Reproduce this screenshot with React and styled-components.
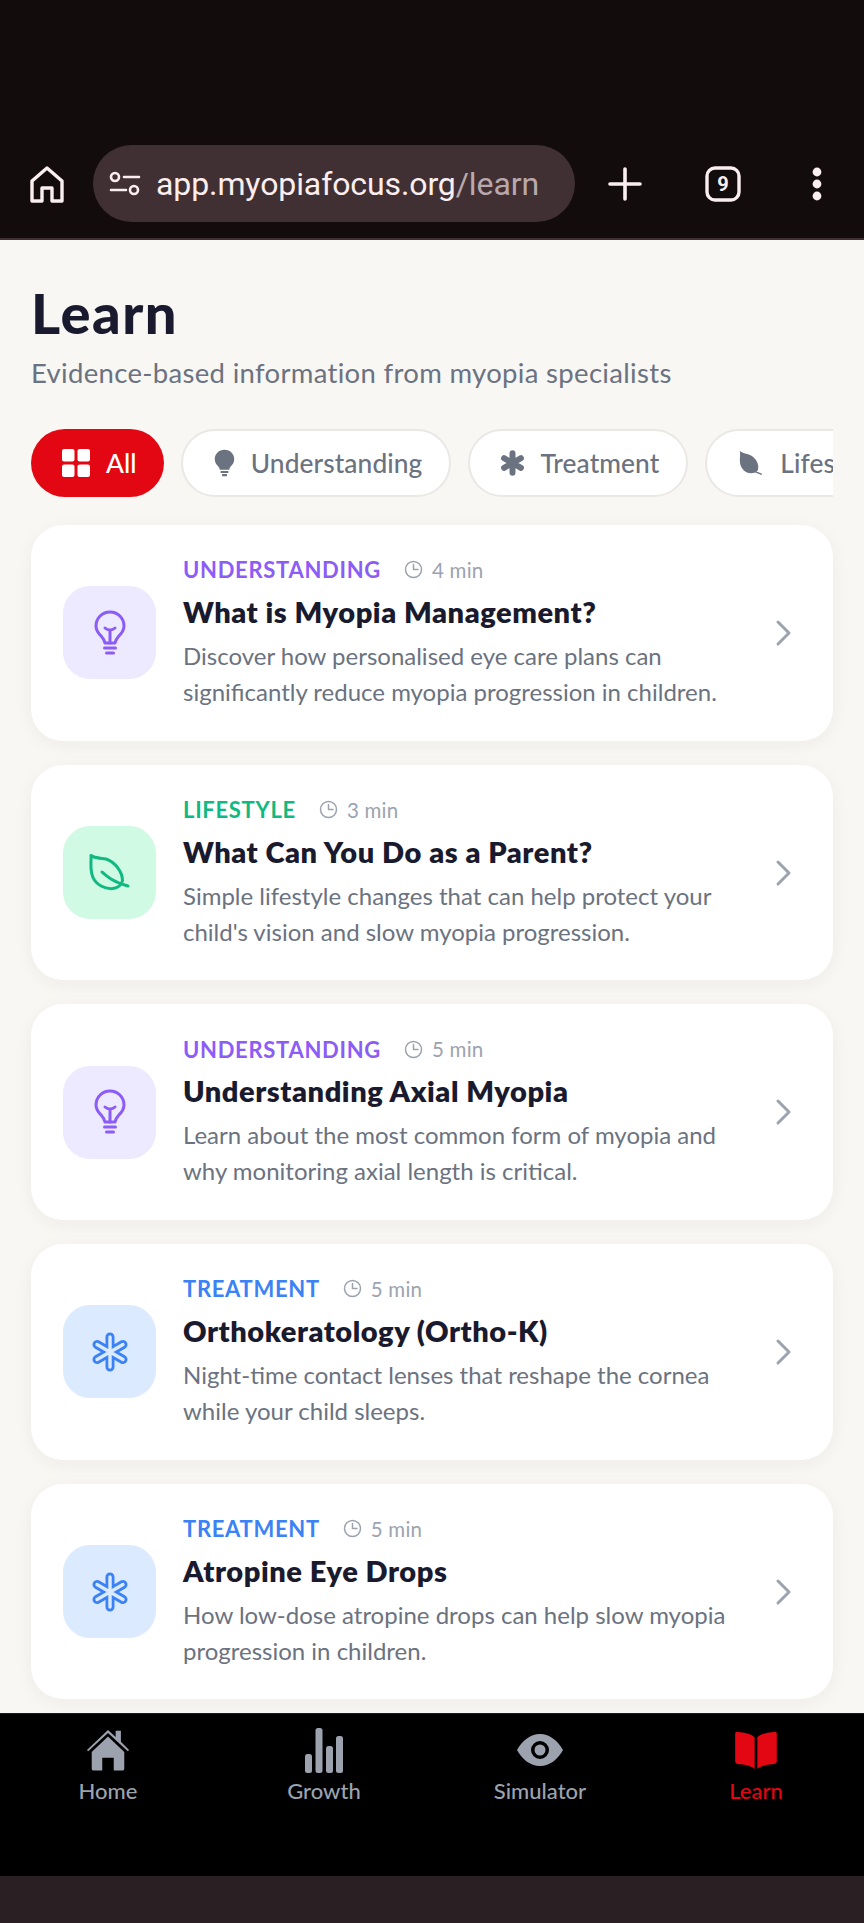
import React from 'react';
import styled, { createGlobalStyle } from 'styled-components';

const Global = createGlobalStyle`
  html, body { margin: 0; padding: 0; background: #f8f7f4; }
  * { box-sizing: border-box; }
`;

const FONT = `Lato, "Noto Sans", sans-serif`;

const Screen = styled.div`
  width: 864px;
  height: 1923px;
  display: flex;
  flex-direction: column;
  overflow: hidden;
  font-family: ${FONT};
`;

const BrowserBar = styled.div`
  height: 240px;
  flex: none;
  background: #120c0d;
  border-bottom: 2px solid #3f3033;
  padding: 145px 0 0 28px;
  display: flex;
  align-items: flex-start;
  color: #fbeef0;
`;
const BarSlot = styled.div`
  height: 77px;
  display: flex;
  align-items: center;
  justify-content: center;
  flex: none;
  width: ${p => p.$w}px;
  margin-left: ${p => p.$ml || 0}px;
`;
const UrlPill = styled.div`
  width: 482px;
  height: 77px;
  margin-left: 27px;
  flex: none;
  background: #413033;
  border-radius: 39px;
  display: flex;
  align-items: center;
  padding-left: 16px;
  gap: 15px;
  font-family: Roboto, sans-serif;
  font-size: 32px;
  letter-spacing: -0.1px;
  color: #fbeef0;
`;
const UrlMuted = styled.span`
  color: #b9a9ac;
`;

const Main = styled.main`
  flex: 1;
  min-height: 0;
  background: #f8f7f4;
  padding: 42px 31px 0;
  overflow: hidden;
`;
const Title = styled.h1`
  margin: 0;
  font-size: 56px;
  line-height: 62px;
  font-weight: 900;
  letter-spacing: 1.5px;
  color: #1a1a2e;
`;
const Subtitle = styled.p`
  margin: 11px 0 0;
  font-size: 27.5px;
  line-height: 36px;
  letter-spacing: 0.32px;
  color: #6b7280;
`;
const ChipRow = styled.div`
  display: flex;
  gap: 17px;
  margin-top: 38px;
  overflow: hidden;
`;
const Chip = styled.div`
  flex: none;
  height: 68px;
  border-radius: 34px;
  display: flex;
  align-items: center;
  gap: 15px;
  padding: 0 27px 0 30px;
  font-size: 26.3px;
  font-weight: 500;
  letter-spacing: 0.1px;
  background: ${p => (p.$active ? '#e30613' : '#fff')};
  color: ${p => (p.$active ? '#fff' : '#6b7280')};
  border: ${p => (p.$active ? 'none' : '2px solid #e9e8e6')};
`;

const CardList = styled.div`
  display: flex;
  flex-direction: column;
  gap: 24px;
  margin-top: 28px;
`;
const Card = styled.article`
  height: 215.7px;
  background: #fff;
  border-radius: 32px;
  box-shadow: 0 4px 18px rgba(40, 35, 20, 0.05);
  display: flex;
  align-items: center;
  padding: 0 29px 0 32px;
`;
const IconBox = styled.div`
  width: 93px;
  height: 93px;
  flex: none;
  border-radius: 27px;
  background: ${p => p.$bg};
  color: ${p => p.$fg};
  display: flex;
  align-items: center;
  justify-content: center;
`;
const CardBody = styled.div`
  flex: 1;
  min-width: 0;
  margin-left: 27px;
`;
const Meta = styled.div`
  display: flex;
  align-items: center;
  height: 28px;
`;
const Category = styled.span`
  font-size: 22px;
  font-weight: 700;
  letter-spacing: 0.7px;
  color: ${p => p.$color};
`;
const Duration = styled.span`
  display: flex;
  align-items: center;
  gap: 9px;
  margin-left: 23px;
  font-size: 20.5px;
  letter-spacing: 0.2px;
  color: #9ca3af;
`;
const CardTitle = styled.h2`
  margin: 10px 0 0;
  font-size: 29px;
  line-height: 36px;
  font-weight: 800;
  letter-spacing: 0.55px;
  color: #1a1a2e;
`;
const Desc = styled.p`
  margin: 8px 0 0;
  font-size: 24px;
  line-height: 36px;
  color: #6b7280;
  white-space: pre-line;
`;
const Chevron = styled.div`
  width: 40px;
  flex: none;
  display: flex;
  justify-content: center;
  color: #9ca3af;
`;

const BottomNav = styled.nav`
  height: 163px;
  flex: none;
  background: #000;
  display: grid;
  grid-template-columns: repeat(4, 1fr);
  border-top: 1px solid #1b1b1b;
`;
const NavItem = styled.div`
  display: flex;
  flex-direction: column;
  align-items: center;
  padding-top: 11px;
  gap: 2px;
  font-size: 22px;
  font-weight: 500;
  line-height: 28px;
  color: ${p => (p.$active ? '#e30613' : '#9ca3af')};
`;
const NavIcon = styled.div`
  height: 50px;
  display: flex;
  align-items: center;
  justify-content: center;
`;
const SystemStrip = styled.div`
  height: 47px;
  flex: none;
  background: #2a1f22;
`;

// browser chrome icons
const ChromeHome = () => (
  <svg width="36" height="38" viewBox="0 0 36 38" fill="none" stroke="currentColor" strokeWidth="3.4" strokeLinejoin="round">
    <path d="M3 16 18 3l15 13v20H23V23H13v13H3z" />
  </svg>
);
const TuneIcon = () => (
  <svg width="32" height="26" viewBox="0 0 32 26" fill="none" stroke="currentColor" strokeWidth="2.6" strokeLinecap="round">
    <circle cx="6" cy="6" r="4" />
    <path d="M15 6h15M2 19h15" />
    <circle cx="25" cy="19" r="4" />
  </svg>
);
const PlusIcon = () => (
  <svg width="34" height="34" viewBox="0 0 34 34" stroke="currentColor" strokeWidth="3.6" strokeLinecap="round">
    <path d="M17 2v30M2 17h30" />
  </svg>
);
const TabsIcon = () => (
  <svg width="36" height="36" viewBox="0 0 36 36" fill="none">
    <rect x="2" y="2" width="32" height="32" rx="8" stroke="currentColor" strokeWidth="3.4" />
    <text x="18" y="25" textAnchor="middle" fontFamily="Roboto, sans-serif" fontWeight="700" fontSize="20" fill="currentColor">9</text>
  </svg>
);
const DotsIcon = () => (
  <svg width="12" height="34" viewBox="0 0 12 34" fill="currentColor">
    <circle cx="6" cy="5" r="4.4" />
    <circle cx="6" cy="17" r="4.4" />
    <circle cx="6" cy="29" r="4.4" />
  </svg>
);

// filter chip icons
const GridIcon = () => (
  <svg width="30" height="30" viewBox="0 0 30 30" fill="currentColor">
    <rect x="1" y="1" width="12.5" height="12.5" rx="2" />
    <rect x="16.5" y="1" width="12.5" height="12.5" rx="2" />
    <rect x="1" y="16.5" width="12.5" height="12.5" rx="2" />
    <rect x="16.5" y="16.5" width="12.5" height="12.5" rx="2" />
  </svg>
);
const BulbSolid = () => (
  <svg width="23" height="30" viewBox="0 0 26 32" fill="currentColor">
    <path d="M13 1C6.6 1 2 5.8 2 11.5c0 4 2 6.4 4 8.500 1 1.100 1.500 2.200 1.700 3.500h10.600c.2-1.300.7-2.400 1.700-3.500 2-2.100 4-4.500 4-8.500C24 5.800 19.400 1 13 1z" />
    <rect x="8.500" y="25" width="9" height="2.400" rx="1" />
    <rect x="10" y="28.500" width="6" height="2.400" rx="1" />
  </svg>
);
const AsteriskSolid = () => (
  <svg width="25" height="26" viewBox="0 0 26 28" stroke="currentColor" strokeWidth="6.400" strokeLinecap="round">
    <path d="M13 3.500v21M3.900 8.750l18.200 10.500M22.100 8.750 3.900 19.250" />
  </svg>
);
const LeafSolid = () => (
  <svg width="28" height="26" viewBox="0 0 28 28" fill="currentColor">
    <path d="M2 1c1 6-1.500 12 2 18 2.800 5 9 7 13.500 5.500 2-.7 3.300-2 4-3.300C23 16 20 9.500 14 6 10 3.700 5 3.500 2 1z" />
    <path d="M19 23.500 25 26" stroke="currentColor" strokeWidth="1.600" strokeLinecap="round" />
  </svg>
);

// card icons
const BulbLine = () => (
  <svg width="32" height="46" viewBox="0 0 32 46" fill="none" stroke="currentColor" strokeWidth="3" strokeLinecap="round" strokeLinejoin="round">
    <path d="M11 33c-.3-2.400-1.400-4.300-3.500-6.600C4.500 23.500 2 20.600 2 16 2 8 8.300 2 16 2s14 6 14 14c0 4.600-2.500 7.500-5.500 10.400-2.100 2.300-3.200 4.200-3.500 6.600z" />
    <path d="M16 33V20M11 18c1.700 1.500 3.500 2 5 2s3.300-.5 5-2" />
    <path d="M10.500 38h11M12.500 43h7" />
  </svg>
);
const LeafLine = () => (
  <svg width="42" height="38" viewBox="0 0 42 38" fill="none" stroke="currentColor" strokeWidth="3" strokeLinecap="round" strokeLinejoin="round">
    <path d="M2 1.500c.500 6-1.500 14 2 22 3 7 12 12 20 11 5.500-.7 8.500-4 9.500-8C33.500 18 26 8 17 5 10 4 5 4 2 1.500z" />
    <path d="M13 18c5 4.500 11 10 26 14" />
  </svg>
);
const ArmsLine = ({ bg }) => {
  const arms = 'M20 5v30M7 12.500l26 15M33 12.500 7 27.500';
  return (
    <svg width="40" height="40" viewBox="0 0 40 40" fill="none" strokeLinecap="round">
      <path d={arms} stroke="currentColor" strokeWidth="9" />
      <path d={arms} stroke={bg} strokeWidth="3.400" />
    </svg>
  );
};
const ClockIcon = () => (
  <svg width="19" height="19" viewBox="0 0 19 19" fill="none" stroke="currentColor" strokeWidth="1.500" strokeLinecap="round" strokeLinejoin="round">
    <circle cx="9.500" cy="9.500" r="8" />
    <path d="M9.500 4.500v5h4.500" />
  </svg>
);
const ChevronIcon = () => (
  <svg width="18" height="28" viewBox="0 0 18 28" fill="none" stroke="currentColor" strokeWidth="3" strokeLinecap="round" strokeLinejoin="round">
    <path d="M3 3l11 11L3 25" />
  </svg>
);

// bottom nav icons
const NavHome = () => (
  <svg width="46" height="44" viewBox="0 0 46 46" fill="currentColor">
    <path d="M1 23 23 2l8 7.500V3h5.500v11.500L45 23l-1.300 1.400L23 5.300 2.300 24.400z" />
    <path d="M6 25 23 9l17 16v17.500a2 2 0 0 1-2 2H29V31H17v13.500H8a2 2 0 0 1-2-2z" />
  </svg>
);
const NavGrowth = () => (
  <svg width="40" height="46" viewBox="0 0 40 46" fill="currentColor">
    <rect x="1" y="27" width="7" height="19" rx="2.500" />
    <rect x="11.500" y="1" width="7" height="45" rx="2.500" />
    <rect x="22" y="19" width="7" height="27" rx="2.500" />
    <rect x="32" y="9" width="7" height="37" rx="2.500" />
  </svg>
);
const NavEye = () => (
  <svg width="46" height="32" viewBox="0 0 46 32" fill="currentColor" fillRule="evenodd">
    <path d="M23 0c10 0 18 7 23 16-5 9-13 16-23 16S5 25 0 16C5 7 13 0 23 0zm0 7a9 9 0 1 0 0 18 9 9 0 0 0 0-18zm0 3.500a5.500 5.500 0 1 1 0 11 5.500 5.500 0 0 1 0-11z" />
  </svg>
);
const NavBook = () => (
  <svg width="46" height="38" viewBox="0 0 48 42" fill="currentColor">
    <path d="M22.500 7v35c-4-3.500-10-5-19-5.500A3 3 0 0 1 1 33.500V3a2 2 0 0 1 2.500-2c8 .5 15 2 19 6z" />
    <path d="M25.500 7v35c4-3.500 10-5 19-5.500a3 3 0 0 0 2.500-3V3a2 2 0 0 0-2.500-2c-8 .5-15 2-19 6z" />
  </svg>
);

const KINDS = {
  understanding: { label: 'UNDERSTANDING', color: '#8b5cf6', bg: '#ede9fe', icon: <BulbLine /> },
  lifestyle: { label: 'LIFESTYLE', color: '#10b981', bg: '#d1fae5', icon: <LeafLine /> },
  treatment: { label: 'TREATMENT', color: '#3b82f6', bg: '#dbeafe', icon: <ArmsLine bg="#dbeafe" /> },
};

const ARTICLES = [
  { kind: 'understanding', min: 4, title: 'What is Myopia Management?', desc: 'Discover how personalised eye care plans can\nsignificantly reduce myopia progression in children.' },
  { kind: 'lifestyle', min: 3, title: 'What Can You Do as a Parent?', desc: "Simple lifestyle changes that can help protect your\nchild's vision and slow myopia progression." },
  { kind: 'understanding', min: 5, title: 'Understanding Axial Myopia', desc: 'Learn about the most common form of myopia and\nwhy monitoring axial length is critical.' },
  { kind: 'treatment', min: 5, title: 'Orthokeratology (Ortho-K)', desc: 'Night-time contact lenses that reshape the cornea\nwhile your child sleeps.' },
  { kind: 'treatment', min: 5, title: 'Atropine Eye Drops', desc: 'How low-dose atropine drops can help slow myopia\nprogression in children.' },
];

const NAV = [
  { label: 'Home', icon: <NavHome /> },
  { label: 'Growth', icon: <NavGrowth /> },
  { label: 'Simulator', icon: <NavEye /> },
  { label: 'Learn', icon: <NavBook />, active: true },
];

export default function App() {
  return (
    <Screen>
      <Global />
      <BrowserBar>
        <BarSlot $w={38}><ChromeHome /></BarSlot>
        <UrlPill>
          <TuneIcon />
          <span>app.myopiafocus.org<UrlMuted>/learn</UrlMuted></span>
        </UrlPill>
        <BarSlot $w={36} $ml={32}><PlusIcon /></BarSlot>
        <BarSlot $w={36} $ml={62}><TabsIcon /></BarSlot>
        <BarSlot $w={12} $ml={70}><DotsIcon /></BarSlot>
      </BrowserBar>

      <Main>
        <Title>Learn</Title>
        <Subtitle>Evidence-based information from myopia specialists</Subtitle>
        <ChipRow>
          <Chip $active><GridIcon />All</Chip>
          <Chip><BulbSolid />Understanding</Chip>
          <Chip><AsteriskSolid />Treatment</Chip>
          <Chip><LeafSolid />Lifestyle</Chip>
        </ChipRow>
        <CardList>
          {ARTICLES.map(a => {
            const kind = KINDS[a.kind];
            return (
              <Card key={a.title}>
                <IconBox $bg={kind.bg} $fg={kind.color}>{kind.icon}</IconBox>
                <CardBody>
                  <Meta>
                    <Category $color={kind.color}>{kind.label}</Category>
                    <Duration><ClockIcon />{a.min} min</Duration>
                  </Meta>
                  <CardTitle>{a.title}</CardTitle>
                  <Desc>{a.desc}</Desc>
                </CardBody>
                <Chevron><ChevronIcon /></Chevron>
              </Card>
            );
          })}
        </CardList>
      </Main>

      <BottomNav>
        {NAV.map(n => (
          <NavItem key={n.label} $active={n.active}>
            <NavIcon>{n.icon}</NavIcon>
            {n.label}
          </NavItem>
        ))}
      </BottomNav>
      <SystemStrip />
    </Screen>
  );
}
